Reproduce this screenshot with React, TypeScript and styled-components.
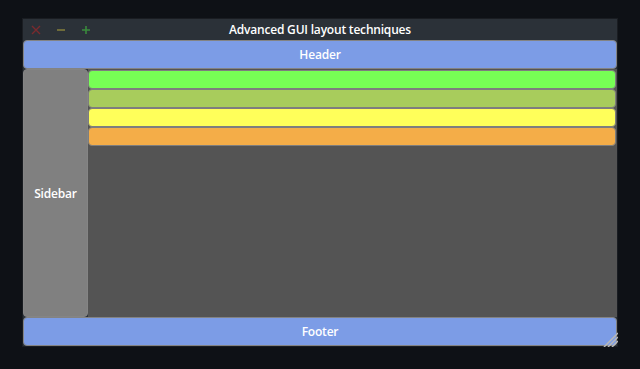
import React from 'react';
import styled, { createGlobalStyle } from 'styled-components';

const Global = createGlobalStyle`
  html, body {
    margin: 0;
    padding: 0;
    background: #0e1116;
  }
  body {
    font-family: "Open Sans", "DejaVu Sans", sans-serif;
  }
`;

const Screen = styled.div`
  width: 640px;
  height: 369px;
  padding: 18px 0 0 22px;
  box-sizing: border-box;
`;

const Window = styled.div`
  position: relative;
  width: 596px;
  height: 329px;
  display: flex;
  flex-direction: column;
  background: #2b3138;
  border: 1px solid #1a1d22;
  box-sizing: border-box;
`;

const TitleBar = styled.div`
  position: relative;
  height: 21px;
  flex: none;
  display: flex;
  align-items: center;
  justify-content: center;
  color: #ffffff;
  font-size: 12px;
  font-weight: 600;
  letter-spacing: -0.2px;
`;

const Controls = styled.div`
  position: absolute;
  left: 6px;
  top: 0;
  bottom: 0;
  display: flex;
  align-items: center;
  gap: 11px;
`;

const Ctrl = styled.span<{ $color: string }>`
  width: 14px;
  height: 14px;
  display: flex;
  align-items: center;
  justify-content: center;
  color: ${({ $color }) => $color};
`;

const Body = styled.div`
  flex: 1;
  display: flex;
  flex-direction: column;
  min-height: 0;
`;

const Bar = styled.div`
  height: 29px;
  flex: none;
  display: flex;
  align-items: center;
  justify-content: center;
  background: #7c9ce6;
  border: 1px solid #838383;
  border-radius: 4px;
  box-sizing: border-box;
  color: #ffffff;
  font-size: 12px;
  font-weight: 600;
  letter-spacing: -0.2px;
`;

const Middle = styled.div`
  flex: 1;
  display: flex;
  min-height: 0;
`;

const Sidebar = styled.div`
  width: 65px;
  flex: none;
  display: flex;
  align-items: center;
  justify-content: center;
  background: #808080;
  border: 1px solid #858585;
  border-radius: 4px;
  box-sizing: border-box;
  color: #ffffff;
  font-size: 12px;
  font-weight: 600;
  letter-spacing: -0.2px;
`;

const Content = styled.div`
  flex: 1;
  display: flex;
  flex-direction: column;
  background: #545454;
  padding-top: 1px;
`;

const Row = styled.div<{ $bg: string }>`
  height: 19px;
  flex: none;
  background: ${({ $bg }) => $bg};
  border: 1px solid #7e7e7e;
  border-radius: 4px;
  box-sizing: border-box;
  margin-right: 1px;
`;

const Grip = styled.svg`
  position: absolute;
  right: -1px;
  bottom: -1px;
`;

const rows = ['#77ff55', '#a8cc5c', '#ffff5a', '#f4ad48'];

export default function App() {
  return (
    <Screen>
      <Global />
      <Window>
        <TitleBar>
          <Controls>
            <Ctrl $color="#7a2a2e">
              <svg width="10" height="10" viewBox="0 0 10 10">
                <path d="M1 1L9 9M9 1L1 9" stroke="currentColor" strokeWidth="1.4" />
              </svg>
            </Ctrl>
            <Ctrl $color="#807a3c">
              <svg width="10" height="10" viewBox="0 0 10 10">
                <path d="M1 5H9" stroke="currentColor" strokeWidth="1.6" />
              </svg>
            </Ctrl>
            <Ctrl $color="#3a8a3c">
              <svg width="10" height="10" viewBox="0 0 10 10">
                <path d="M1 5H9M5 1V9" stroke="currentColor" strokeWidth="1.6" />
              </svg>
            </Ctrl>
          </Controls>
          Advanced GUI layout techniques
        </TitleBar>
        <Body>
          <Bar>Header</Bar>
          <Middle>
            <Sidebar>Sidebar</Sidebar>
            <Content>
              {rows.map((c) => (
                <Row key={c} $bg={c} />
              ))}
            </Content>
          </Middle>
          <Bar>Footer</Bar>
        </Body>
        <Grip width="16" height="16" viewBox="0 0 16 16">
          <path d="M2 16L16 2M6 16L16 6M10 16L16 10" stroke="#b8b8b8" strokeWidth="1.5" />
        </Grip>
      </Window>
    </Screen>
  );
}
